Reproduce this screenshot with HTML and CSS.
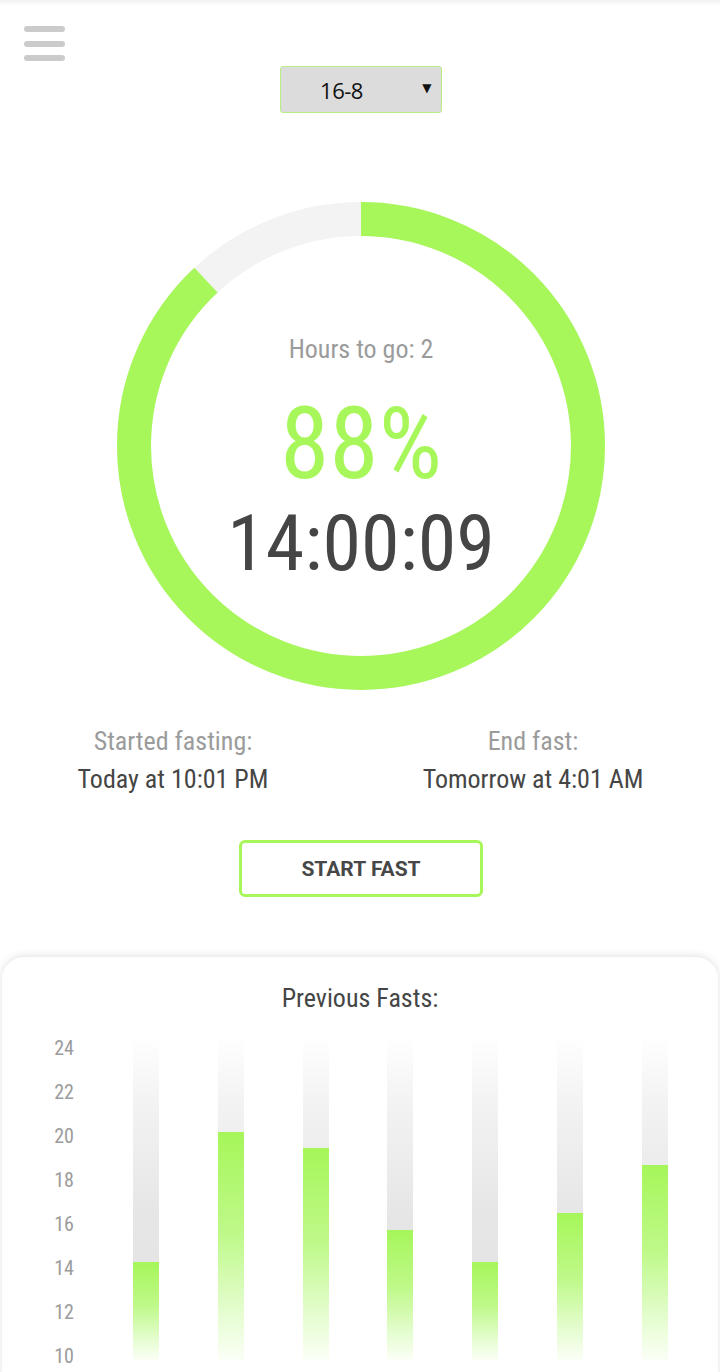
FILE: index.html
```html
<!DOCTYPE html>
<html>
<head>
<meta charset="utf-8">
<link rel="stylesheet" href="styles.css">
</head>
<body>
<div class="app">
  <header class="header">
    <div class="burger"><span></span><span></span><span></span></div>
    <div class="select"><span class="select-value">16-8</span><span class="select-arrow">▼</span></div>
  </header>

  <section class="ring">
    <svg class="ring-svg" viewBox="0 0 488 488" width="488" height="488">
      <circle cx="244" cy="244" r="227" fill="none" stroke="#f3f3f3" stroke-width="34"/>
      <circle cx="244" cy="244" r="227" fill="none" stroke="#a7f75a" stroke-width="34" stroke-dasharray="1255.1 1426.3" transform="rotate(-90 244 244)"/>
    </svg>
    <div class="ring-text">
      <div class="hours">Hours to go: 2</div>
      <div class="percent">88%</div>
      <div class="clock">14:00:09</div>
    </div>
  </section>

  <section class="times">
    <div class="time-col">
      <div class="time-label">Started fasting:</div>
      <div class="time-value">Today at 10:01 PM</div>
    </div>
    <div class="time-col">
      <div class="time-label">End fast:</div>
      <div class="time-value">Tomorrow at 4:01 AM</div>
    </div>
  </section>

  <div class="btn-row"><button class="btn">START FAST</button></div>

  <section class="card">
    <h2 class="card-title">Previous Fasts:</h2>
    <div class="chart">
      <div class="axis">
        <div>24</div><div>22</div><div>20</div><div>18</div><div>16</div><div>14</div><div>12</div><div>10</div>
      </div>
      <div class="bars">
        <div class="bar-col"><div class="bar"><div class="fill" style="height:98px"></div></div></div>
        <div class="bar-col"><div class="bar"><div class="fill" style="height:228px"></div></div></div>
        <div class="bar-col"><div class="bar"><div class="fill" style="height:212px"></div></div></div>
        <div class="bar-col"><div class="bar"><div class="fill" style="height:130px"></div></div></div>
        <div class="bar-col"><div class="bar"><div class="fill" style="height:98px"></div></div></div>
        <div class="bar-col"><div class="bar"><div class="fill" style="height:147px"></div></div></div>
        <div class="bar-col"><div class="bar"><div class="fill" style="height:195px"></div></div></div>
      </div>
    </div>
  </section>
</div>
</body>
</html>
```

FILE: styles.css
```css
* { box-sizing: border-box; }
html, body { margin: 0; padding: 0; }
body {
  width: 720px;
  height: 1372px;
  overflow: hidden;
  background: #fff;
  font-family: "Roboto Condensed", Roboto, "Liberation Sans", sans-serif;
  font-stretch: condensed;
  color: #454545;
}
.app {
  background: linear-gradient(#f1f1f1, #fff 6px) no-repeat;
}
.header {
  display: flex;
  flex-direction: column;
  padding-top: 26px;
}
.burger {
  margin-left: 24px;
  width: 41px;
  height: 35px;
  display: flex;
  flex-direction: column;
  justify-content: space-between;
}
.burger span {
  display: block;
  height: 6px;
  border-radius: 3px;
  background: #cbcbcb;
}
.select {
  align-self: center;
  margin-left: 1px;
  margin-top: 5px;
  width: 162px;
  height: 47px;
  background: #dcdcdc;
  border: 1px solid #b9ee86;
  border-radius: 3px;
  display: flex;
  align-items: center;
  position: relative;
  font-family: "Open Sans", sans-serif;
  font-stretch: normal;
  color: #111;
}
.select-value {
  flex: 1;
  text-align: center;
  font-size: 22px;
  padding-right: 38px;
  letter-spacing: -0.5px;
}
.select-arrow {
  position: absolute;
  right: 9px;
  top: 14px;
  font-family: "DejaVu Sans", sans-serif;
  font-size: 12px;
}
.ring {
  margin: 89px auto 0;
  width: 488px;
  height: 488px;
  display: grid;
  position: relative;
  left: 1px;
}
.ring-svg, .ring-text { grid-area: 1 / 1; }
.ring-svg { display: block; }
.ring-text {
  display: flex;
  flex-direction: column;
  align-items: center;
  padding-top: 131px;
}
.hours {
  font-size: 26px;
  line-height: 32px;
  color: #9b9b9b;
}
.percent {
  margin-top: 29px;
  font-size: 100px;
  line-height: 100px;
  font-weight: 400;
  color: #a7f75a;
}
.clock {
  margin-top: 2px;
  font-size: 78px;
  line-height: 96px;
  color: #454545;
}
.times {
  margin-top: 33px;
  display: grid;
  grid-template-columns: 346px 1fr;
  text-align: center;
}
.time-label {
  font-size: 26px;
  line-height: 36px;
  color: #9b9b9b;
}
.time-value {
  font-size: 26px;
  line-height: 40px;
  color: #454545;
}
.btn-row {
  display: flex;
  justify-content: center;
  margin-top: 41px;
  padding-left: 2px;
}
.btn {
  width: 244px;
  height: 57px;
  background: #fff;
  border: 3px solid #a7f75a;
  border-radius: 6px;
  font-family: Roboto, "Liberation Sans", sans-serif;
  font-stretch: normal;
  font-size: 21px;
  font-weight: 700;
  color: #474747;
  padding: 0;
}
.card {
  margin: 60px 2px 0;
  border-radius: 22px 22px 0 0;
  box-shadow: 0 -1px 8px rgba(0,0,0,0.12);
  background: #fff;
  height: 420px;
  padding-top: 26px;
}
.card-title {
  margin: 0;
  text-align: center;
  font-size: 26px;
  line-height: 30px;
  font-weight: 400;
  color: #454545;
}
.chart {
  display: flex;
  margin-top: 13px;
}
.axis {
  width: 72px;
  text-align: right;
}
.axis div {
  height: 44px;
  line-height: 44px;
  font-size: 20px;
  color: #9b9b9b;
}
.bars {
  margin-left: 30px;
  width: 593px;
  display: grid;
  grid-template-columns: repeat(7, 1fr);
  padding-top: 10px;
}
.bar-col {
  display: flex;
  justify-content: center;
}
.bar {
  width: 26px;
  height: 324px;
  display: flex;
  flex-direction: column;
  justify-content: flex-end;
  background: linear-gradient(to bottom, #ffffff 0%, #f3f3f3 20%, #e6e6e6 55%, #e3e3e3 100%);
}
.fill {
  background: linear-gradient(to bottom, #a6f65a 0%, #bff98a 45%, #e6fdd2 80%, #fbfff6 100%);
}
```
